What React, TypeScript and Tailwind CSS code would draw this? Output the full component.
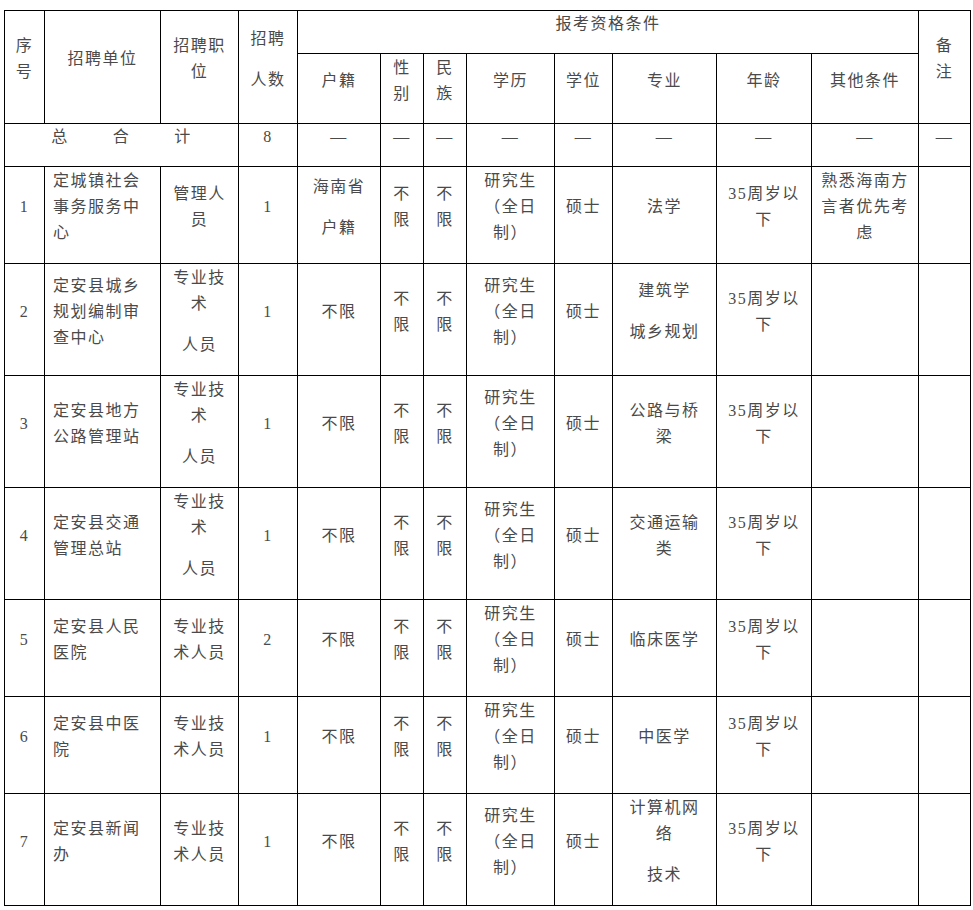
type Cell = string[][]; // paragraphs -> lines

const font = { fontFamily: '"Liberation Serif", "Noto Sans CJK SC", serif' };

function Lines({ paras }: { paras: Cell }) {
  return (
    <div>
      {paras.map((lines, i) => (
        <div key={i} className={i > 0 ? "mt-[15px]" : ""}>
          {lines.map((l, j) => (
            <div key={j} className="whitespace-nowrap">
              {l}
            </div>
          ))}
        </div>
      ))}
    </div>
  );
}

const td = "border border-black align-middle text-center pt-0 pb-4 px-0";

type Row = {
  no: string;
  unit: string[];
  post: Cell;
  count: string;
  huji: Cell;
  major: Cell;
  other: string[];
  h: string;
};

const rows: Row[] = [
  {
    no: "1",
    unit: ["定城镇社会", "事务服务中", "心"],
    post: [["管理人", "员"]],
    count: "1",
    huji: [["海南省"], ["户籍"]],
    major: [["法学"]],
    other: ["熟悉海南方", "言者优先考", "虑"],
    h: "h-[97px]",
  },
  {
    no: "2",
    unit: ["定安县城乡", "规划编制审", "查中心"],
    post: [["专业技", "术"], ["人员"]],
    count: "1",
    huji: [["不限"]],
    major: [["建筑学"], ["城乡规划"]],
    other: [],
    h: "h-[112px]",
  },
  {
    no: "3",
    unit: ["定安县地方", "公路管理站"],
    post: [["专业技", "术"], ["人员"]],
    count: "1",
    huji: [["不限"]],
    major: [["公路与桥", "梁"]],
    other: [],
    h: "h-[112px]",
  },
  {
    no: "4",
    unit: ["定安县交通", "管理总站"],
    post: [["专业技", "术"], ["人员"]],
    count: "1",
    huji: [["不限"]],
    major: [["交通运输", "类"]],
    other: [],
    h: "h-[112px]",
  },
  {
    no: "5",
    unit: ["定安县人民", "医院"],
    post: [["专业技", "术人员"]],
    count: "2",
    huji: [["不限"]],
    major: [["临床医学"]],
    other: [],
    h: "h-[97px]",
  },
  {
    no: "6",
    unit: ["定安县中医", "院"],
    post: [["专业技", "术人员"]],
    count: "1",
    huji: [["不限"]],
    major: [["中医学"]],
    other: [],
    h: "h-[97px]",
  },
  {
    no: "7",
    unit: ["定安县新闻", "办"],
    post: [["专业技", "术人员"]],
    count: "1",
    huji: [["不限"]],
    major: [["计算机网", "络"], ["技术"]],
    other: [],
    h: "h-[112px]",
  },
];

export default function App() {
  return (
    <div className="min-h-screen bg-white pl-[4px] pt-[10px]">
      <table
        className="table-fixed border-collapse w-[966px] text-[16px] leading-[26px] tracking-[1.5px] text-[#4a4a4a]"
        style={font}
      >
        <colgroup>
          <col className="w-[40px]" />
          <col className="w-[116px]" />
          <col className="w-[78px]" />
          <col className="w-[59px]" />
          <col className="w-[83px]" />
          <col className="w-[43px]" />
          <col className="w-[43px]" />
          <col className="w-[88px]" />
          <col className="w-[58px]" />
          <col className="w-[104px]" />
          <col className="w-[95px]" />
          <col className="w-[107px]" />
          <col className="w-[52px]" />
        </colgroup>
        <thead>
          <tr className="h-[43px]">
            <td rowSpan={2} className={td}>
              <Lines paras={[["序", "号"]]} />
            </td>
            <td rowSpan={2} className={td}>
              招聘单位
            </td>
            <td rowSpan={2} className={td}>
              <Lines paras={[["招聘职", "位"]]} />
            </td>
            <td rowSpan={2} className={td}>
              <Lines paras={[["招聘"], ["人数"]]} />
            </td>
            <td colSpan={8} className={td}>
              报考资格条件
            </td>
            <td rowSpan={2} className={td}>
              <Lines paras={[["备", "注"]]} />
            </td>
          </tr>
          <tr className="h-[70px]">
            <td className={td}>户籍</td>
            <td className={td}>
              <Lines paras={[["性", "别"]]} />
            </td>
            <td className={td}>
              <Lines paras={[["民", "族"]]} />
            </td>
            <td className={td}>学历</td>
            <td className={td}>学位</td>
            <td className={td}>专业</td>
            <td className={td}>年龄</td>
            <td className={td}>其他条件</td>
          </tr>
        </thead>
        <tbody>
          <tr className="h-[43px]">
            <td colSpan={3} className={td + " pb-3"}>
              <div className="flex justify-center gap-[44px]">
                <span>总</span>
                <span>合</span>
                <span>计</span>
              </div>
            </td>
            <td className={td + " pb-3"}>8</td>
            {Array.from({ length: 9 }).map((_, i) => (
              <td key={i} className={td + " pb-3"}>
                —
              </td>
            ))}
          </tr>
          {rows.map((r) => (
            <tr key={r.no} className={r.h}>
              <td className={td}>{r.no}</td>
              <td className={td + " text-left pl-2"}>
                <Lines paras={[r.unit]} />
              </td>
              <td className={td}>
                <Lines paras={r.post} />
              </td>
              <td className={td}>{r.count}</td>
              <td className={td}>
                <Lines paras={r.huji} />
              </td>
              <td className={td}>
                <Lines paras={[["不", "限"]]} />
              </td>
              <td className={td}>
                <Lines paras={[["不", "限"]]} />
              </td>
              <td className={td}>
                <Lines paras={[["研究生", "（全日", "制）"]]} />
              </td>
              <td className={td}>硕士</td>
              <td className={td}>
                <Lines paras={r.major} />
              </td>
              <td className={td}>
                <Lines paras={[["35周岁以", "下"]]} />
              </td>
              <td className={td}>
                {r.other.length > 0 && <Lines paras={[r.other]} />}
              </td>
              <td className={td}></td>
            </tr>
          ))}
        </tbody>
      </table>
    </div>
  );
}
